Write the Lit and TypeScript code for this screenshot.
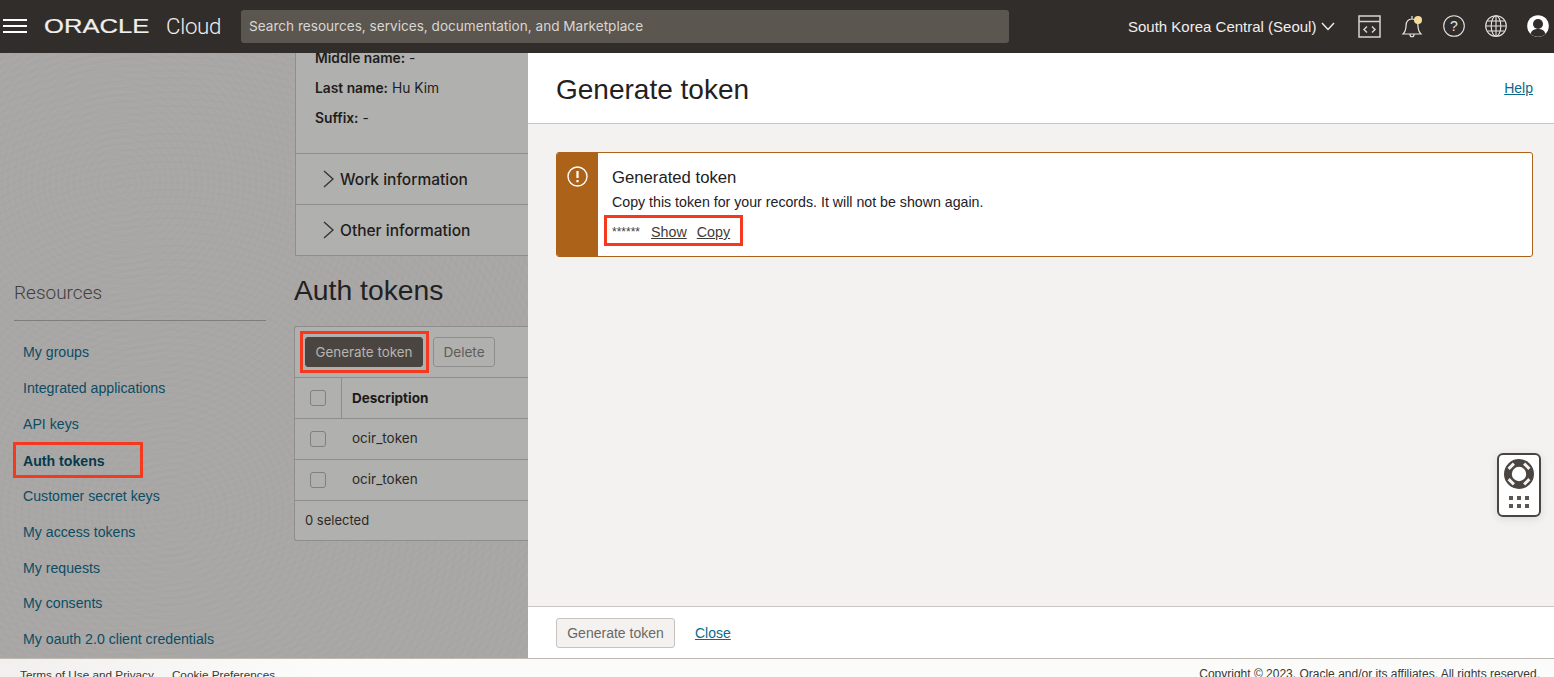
import { LitElement, html, css, svg } from 'lit'
import { customElement } from 'lit/decorators.js'

const sideLinks = [
  'My groups',
  'Integrated applications',
  'API keys',
  'Auth tokens',
  'Customer secret keys',
  'My access tokens',
  'My requests',
  'My consents',
  'My oauth 2.0 client credentials'
]

const lifebuoy = svg`
  <circle cx="15" cy="15" r="15" fill="#4a4541"/>
  <path d="M8.300 8.300L6.200 6.200M21.700 8.300l2.100-2.100M8.300 21.700l-2.100 2.100M21.700 21.700l2.100 2.100" stroke="#f4f3f2" stroke-width="7.500"/>
  <circle cx="15" cy="15" r="8" fill="#fff" stroke="#4a4541" stroke-width="1.600"/>`

@customElement('app-root')
export class AppRoot extends LitElement {
  static styles = css`
    :host {
      display: block;
      position: relative;
      height: 677px;
      overflow: hidden;
      font-family: "Liberation Sans", Arial, sans-serif;
      font-size: 14px;
      color: #1d1b19;
      background: #a8a7a6;
    }

    /* top bar */
    .topbar {
      display: flex;
      align-items: center;
      box-sizing: border-box;
      height: 53px;
      padding-bottom: 1px;
      background: #312d2a;
      color: #f1efed;
    }
    .burger {
      display: flex;
      flex-direction: column;
      gap: 4px;
      width: 24px;
      margin-left: 3px;
    }
    .burger i {
      display: block;
      height: 2px;
      background: #fff;
    }
    .logo {
      display: flex;
      align-items: center;
      width: 197px;
      margin-left: 17px;
    }
    .logo-word {
      display: inline-block;
      width: 122px;
      font-size: 20px;
      line-height: 22px;
      -webkit-text-stroke: 0.2px #f1efed;
      transform: scaleX(1.28);
      transform-origin: left center;
    }
    .logo-cloud {
      font-size: 22.3px;
      font-family: Roboto, sans-serif;
      font-weight: 300;
      letter-spacing: -0.3px;
    }
    .search {
      display: flex;
      align-items: center;
      box-sizing: border-box;
      width: 768px;
      height: 33px;
      padding-left: 8px;
      border-radius: 3px;
      background: #5b5650;
      color: #d9d6d2;
      font-family: Inter, sans-serif;
      font-size: 13.6px;
    }
    .region {
      display: flex;
      align-items: center;
      gap: 5px;
      margin-left: 119px;
      font-size: 15px;
      white-space: nowrap;
    }
    .tools {
      display: flex;
      align-items: center;
      gap: 20px;
      margin-left: 23px;
    }
    .tools svg {
      display: block;
    }
    .tools .bell {
      margin-right: -1px;
    }

    /* page behind the drawer */
    .main {
      display: flex;
      height: 605px;
    }
    .page {
      display: grid;
      grid-template-columns: 294px 234px;
      width: 528px;
      flex: none;
      overflow: hidden;
      background-color: #a8a7a6;
      background-image:
        repeating-radial-gradient(circle at 120px 130px, rgba(255,255,255,0.018) 0 2px, transparent 2px 6px),
        repeating-radial-gradient(circle at 170px 460px, rgba(0,0,0,0.012) 0 2px, transparent 2px 7px);
    }
    .sidebar {
      padding: 227px 28px 0 14px;
    }
    .sidebar h3 {
      margin: 0;
      height: 40px;
      border-bottom: 1px solid #7f7e7c;
      box-sizing: content-box;
      color: #403f3d;
      font-family: Roboto, sans-serif;
      font-weight: 300;
      font-size: 19px;
      line-height: 26px;
    }
    .sidebar ul {
      list-style: none;
      margin: 13.2px 0 0;
      padding: 0;
    }
    .sidebar li {
      height: 35.9px;
      padding-left: 9px;
      line-height: 36px;
      color: #0c4d63;
      font-size: 14.15px;
      white-space: nowrap;
    }
    .sidebar li.active {
      width: 120px;
      margin-left: -1px;
      padding-left: 10px;
      line-height: 38px;
      font-weight: 700;
      color: #06394c;
      outline: 3px solid #f5391f;
      outline-offset: -3px;
    }
    .content {
      min-width: 0;
    }
    .info {
      box-sizing: border-box;
      height: 203px;
      margin-left: 1px;
      border-left: 1px solid #8f8e8c;
      border-bottom: 1px solid #8f8e8c;
      background: #b0b0ae;
      font-family: Inter, sans-serif;
      color: #1f1d1b;
    }
    .fields {
      display: flow-root;
      box-sizing: border-box;
      height: 101px;
      padding-left: 19px;
      border-bottom: 1px solid #8f8e8c;
      font-size: 13.8px;
    }
    .fields div {
      height: 30px;
      line-height: 30px;
    }
    .fields div:first-child {
      margin-top: -10px;
    }
    .fields b {
      font-weight: 600;
    }
    .row {
      display: flex;
      align-items: center;
      gap: 5px;
      box-sizing: border-box;
      height: 50px;
      padding-left: 26px;
      font-size: 15.5px;
      font-weight: 500;
    }
    .row + .row {
      height: 51px;
      border-top: 1px solid #8f8e8c;
    }
    .content h2 {
      margin: 0;
      height: 70px;
      font-size: 28.300px;
      font-weight: 400;
      line-height: 68px;
      color: #23211f;
    }
    .table {
      height: 215px;
      box-sizing: border-box;
      border: 1px solid #8f8e8c;
      border-right: 0;
      border-radius: 3px 0 0 3px;
      background: #b0b0ae;
      font-family: Inter, sans-serif;
      white-space: nowrap;
    }
    .toolbar {
      display: flex;
      align-items: center;
      gap: 10px;
      box-sizing: border-box;
      height: 50px;
      padding-left: 10px;
    }
    .btn {
      box-sizing: border-box;
      height: 30px;
      border-radius: 3px;
      border: 1px solid #8f8e8c;
      line-height: 28px;
      text-align: center;
      color: #5f5d5a;
      font-size: 13.6px;
    }
    .hl {
      margin: -3px -3px -3px -2px;
      padding: 3px 3px 3px 2px;
      outline: 3px solid #f5391f;
    }
    .btn.dark {
      width: 118px;
      background: #4a4541;
      border-color: #4a4541;
      color: #b8b5b0;
      font-size: 13.4px;
    }
    .btn.delete {
      width: 62px;
    }
    .tr {
      display: flex;
      align-items: center;
      box-sizing: border-box;
      height: 41px;
      border-top: 1px solid #8f8e8c;
      color: #2b2926;
      font-size: 13.5px;
    }
    .tr .check {
      flex: none;
      box-sizing: border-box;
      width: 16px;
      height: 16px;
      margin: 0 15px;
      border: 1px solid #82807e;
      border-radius: 3px;
    }
    .tr.head span {
      align-self: stretch;
      display: flex;
      align-items: center;
      padding-left: 10px;
      border-left: 1px solid #8f8e8c;
      font-weight: 700;
      color: #1c1a18;
    }
    .tr.body span {
      padding-left: 11px;
      margin-bottom: 2px;
    }
    .tr.foot {
      padding: 0 0 2px 10px;
      font-size: 13px;
    }

    /* drawer */
    .drawer {
      flex: 1;
      display: flex;
      flex-direction: column;
      background: #f3f2f1;
    }
    .drawer-head {
      display: flex;
      align-items: center;
      justify-content: space-between;
      box-sizing: border-box;
      height: 71px;
      padding: 0 21px 0 28px;
      background: #fff;
      border-bottom: 1px solid #c9c6c2;
    }
    .drawer-head h1 {
      margin: 4px 0 0;
      font-size: 28px;
      font-weight: 400;
      color: #23211f;
    }
    a {
      color: #0a6a8c;
      text-decoration: underline;
    }
    .drawer-body {
      flex: 1;
      padding: 28px 21px 0 28px;
    }
    .notice {
      display: flex;
      box-sizing: border-box;
      height: 105px;
      border: 1px solid #ac6218;
      border-radius: 3px;
      background: #fff;
      overflow: hidden;
    }
    .notice-band {
      flex: none;
      width: 41px;
      padding: 13px 0 0 10px;
      box-sizing: border-box;
      background: #ac6218;
    }
    .notice-band svg {
      display: block;
    }
    .notice-text {
      padding: 15px 0 0 14px;
    }
    .notice-title {
      font-size: 16.700px;
      line-height: 20px;
      color: #23211f;
    }
    .notice-sub {
      margin-top: 4px;
      font-size: 14.2px;
      line-height: 20px;
      color: #23211f;
    }
    .secret {
      display: flex;
      align-items: center;
      gap: 10px;
      box-sizing: border-box;
      width: fit-content;
      height: 25px;
      margin: 6px 0 0 -5px;
      padding: 3px 10px 0 5px;
      color: #3f3c39;
      outline: 3px solid #f5391f;
    }
    .secret .stars {
      width: 29px;
      font-size: 12px;
    }
    .secret u {
      font-size: 14.3px;
    }
    .drawer-foot {
      display: flex;
      align-items: center;
      gap: 20px;
      box-sizing: border-box;
      height: 52px;
      padding-left: 28px;
      background: #fff;
      border-top: 1px solid #c9c6c2;
    }
    .drawer-foot .btn {
      width: 119px;
      background: #f3f2f1;
      border-color: #c6c3bf;
      color: #6b6763;
      font-size: 14px;
    }

    /* bottom strip */
    .footer {
      display: flex;
      justify-content: space-between;
      box-sizing: border-box;
      height: 19px;
      padding: 9px 14px 0 20px;
      border-top: 1px solid #bdb8b1;
      background: linear-gradient(90deg, #f1f0ef, #fbfbfa 20%);
      color: #3a3835;
      font-size: 12px;
      line-height: 13px;
      white-space: nowrap;
    }
    .footer-links {
      display: flex;
      gap: 18px;
      font-size: 11.75px;
    }

    /* floating help */
    .helper {
      position: absolute;
      left: 1497px;
      top: 453px;
      display: flex;
      flex-direction: column;
      align-items: center;
      box-sizing: border-box;
      width: 44px;
      height: 64px;
      padding-top: 4px;
      border: 2px solid #4a4541;
      border-radius: 6px;
      background: #fff;
      box-shadow: 0 2px 10px rgba(0,0,0,0.1);
    }
    .dots {
      display: grid;
      grid-template-columns: repeat(3, 4px);
      gap: 4px;
      margin-top: 7px;
    }
    .dots i {
      height: 4px;
      background: #5b5651;
    }
  `

  chevron () {
    return html`<svg width="13" height="20" viewBox="0 0 13 20" fill="none" stroke="#33312e" stroke-width="1.3"><path d="M2 2l9 8-9 8"/></svg>`
  }

  render () {
    return html`
      <div class="topbar">
        <div class="burger"><i></i><i></i><i></i></div>
        <div class="logo"><span class="logo-word">ORACLE</span><span class="logo-cloud">Cloud</span></div>
        <div class="search">Search resources, services, documentation, and Marketplace</div>
        <div class="region">
          South Korea Central (Seoul)
          <svg width="14" height="9" viewBox="0 0 14 9" fill="none" stroke="#f1efed" stroke-width="1.4"><path d="M1 1l6 6.5L13 1"/></svg>
        </div>
        <div class="tools">
          <svg width="23" height="23" viewBox="0 0 23 23" fill="none" stroke="#d6d4d1" stroke-width="1.5">
            <rect x="1" y="1" width="21" height="21"/><path d="M1 6.500h21M9 11.500l-3 3 3 3M14 11.500l3 3-3 3"/>
          </svg>
          <svg class="bell" width="23" height="24" viewBox="0 0 23 24" fill="none" stroke="#e6e4e1" stroke-width="1.2">
            <path d="M2 20c2-2 3-4 3-8s2-7 6-7 6 3 6 7 1 6 3 8zM9 20.500c0 3 4 3 4 0M11 5V2"/>
            <circle cx="17" cy="6" r="4" fill="#f5dc9b" stroke="none"/>
          </svg>
          <svg width="22" height="22" viewBox="0 0 22 22">
            <circle cx="11" cy="11" r="10.300" fill="none" stroke="#e6e4e1" stroke-width="1.100"/>
            <text x="11" y="16" text-anchor="middle" font-size="14" fill="#e6e4e1" font-family="Liberation Sans">?</text>
          </svg>
          <svg width="22" height="22" viewBox="0 0 22 22" fill="none" stroke="#e6e4e1" stroke-width="1.100">
            <circle cx="11" cy="11" r="10.300"/><ellipse cx="11" cy="11" rx="4.800" ry="10.300"/><path d="M11 1v20M1 11h20M2.500 6h17M2.500 16h17"/>
          </svg>
          <svg width="22" height="22" viewBox="0 0 22 22">
            <circle cx="11" cy="11" r="10.800" fill="#fff"/>
            <circle cx="11" cy="9" r="5" fill="#312d2a"/>
            <path d="M3.500 19c1-4 4-5 7.500-5s6.500 1 7.500 5c-4 3.500-11 3.500-15 0z" fill="#312d2a"/>
          </svg>
        </div>
      </div>

      <div class="main">
        <div class="page">
          <div class="sidebar">
            <h3>Resources</h3>
            <ul>
              ${sideLinks.map(l => html`<li class=${l === 'Auth tokens' ? 'active' : ''}>${l}</li>`)}
            </ul>
          </div>
          <div class="content">
            <div class="info">
              <div class="fields">
                <div><b>Middle name:</b> -</div>
                <div><b>Last name:</b> Hu Kim</div>
                <div><b>Suffix:</b> -</div>
              </div>
              <div class="row">${this.chevron()}Work information</div>
              <div class="row">${this.chevron()}Other information</div>
            </div>
            <h2>Auth tokens</h2>
            <div class="table">
              <div class="toolbar">
                <div class="hl"><div class="btn dark">Generate token</div></div>
                <div class="btn delete">Delete</div>
              </div>
              <div class="tr head"><div class="check"></div><span>Description</span></div>
              <div class="tr body"><div class="check"></div><span>ocir_token</span></div>
              <div class="tr body"><div class="check"></div><span>ocir_token</span></div>
              <div class="tr foot">0 selected</div>
            </div>
          </div>
        </div>

        <div class="drawer">
          <div class="drawer-head">
            <h1>Generate token</h1>
            <a>Help</a>
          </div>
          <div class="drawer-body">
            <div class="notice">
              <div class="notice-band">
                <svg width="21" height="21" viewBox="0 0 21 21" fill="none" stroke="#fff">
                  <circle cx="10.500" cy="10.500" r="9.500" stroke-width="1.400"/>
                  <path d="M10.500 5v7" stroke-width="2.200"/>
                  <path d="M10.500 14v2.200" stroke-width="2.200"/>
                </svg>
              </div>
              <div class="notice-text">
                <div class="notice-title">Generated token</div>
                <div class="notice-sub">Copy this token for your records. It will not be shown again.</div>
                <div class="secret">
                  <span class="stars">******</span>
                  <u>Show</u>
                  <u>Copy</u>
                </div>
              </div>
            </div>
          </div>
          <div class="drawer-foot">
            <div class="btn">Generate token</div>
            <a>Close</a>
          </div>
        </div>
      </div>

      <div class="footer">
        <div class="footer-links"><span>Terms of Use and Privacy</span><span>Cookie Preferences</span></div>
        <div>Copyright © 2023, Oracle and/or its affiliates. All rights reserved.</div>
      </div>

      <div class="helper">
        <svg width="30" height="30" viewBox="0 0 30 30">${lifebuoy}</svg>
        <div class="dots"><i></i><i></i><i></i><i></i><i></i><i></i></div>
      </div>
    `
  }
}
